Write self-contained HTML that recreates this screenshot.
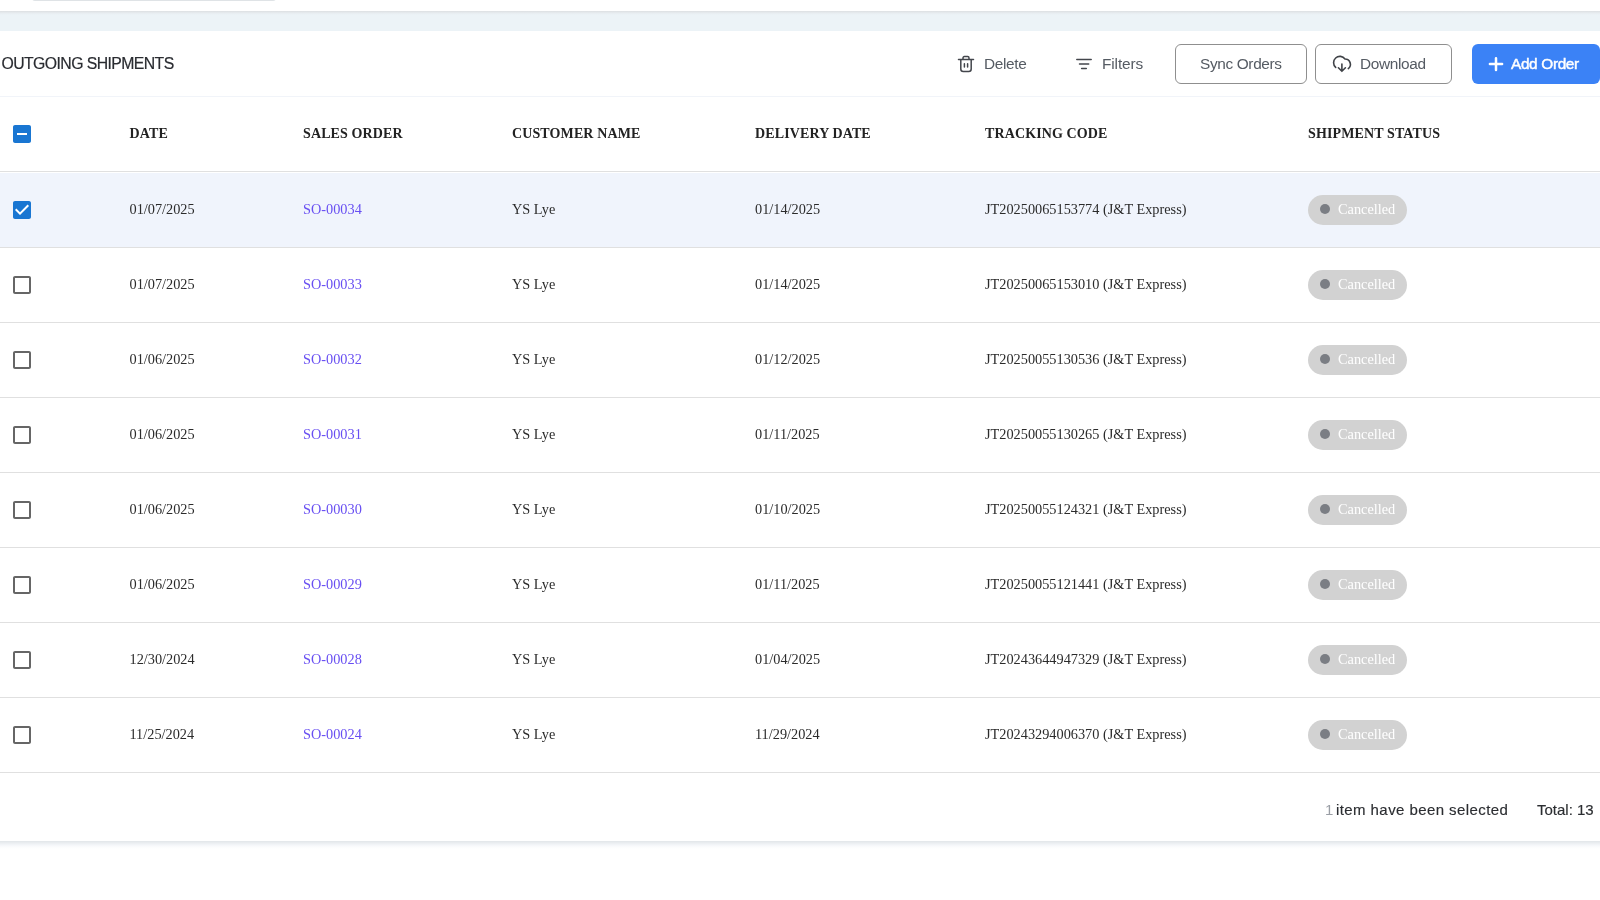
<!DOCTYPE html><html lang="en"><head><meta charset="utf-8"><title>Outgoing Shipments</title><style>
*{box-sizing:border-box;margin:0;padding:0}
html,body{width:1600px;height:900px;overflow:hidden;background:#fff}
body{font-family:"Liberation Sans",sans-serif;color:#2b2b2b;position:relative}
.abs{position:absolute}
#wrap{position:absolute;left:0;top:0;width:1600px;height:900px;will-change:transform}
.topcard{left:0;top:0;width:1600px;height:11px;background:#fff}
.topsh{left:0;top:11px;width:1600px;height:4px;background:linear-gradient(#dcdfe2 0%,#e4e8eb 33%,#e9eff3 66%,#ecf3f7 100%)}
.botsh{left:0;top:841px;width:1600px;height:8px;background:linear-gradient(#e2e6e9 0%,#ebeef1 25%,#f4f6f9 50%,#fbfcfd 75%,#fff 100%)}
.topline{left:32px;top:-4px;width:244px;height:5px;border-bottom:1px solid #dfe3e6;border-radius:0 0 3px 3px}
.band{left:0;top:0;width:1600px;height:31px;background:#ecf3f7}
.card{left:0;top:31px;width:1600px;height:810px;background:#fff}
.title{left:1.5px;top:54px;font-size:15.8px;line-height:20px;color:#2a2c31;letter-spacing:-0.58px;white-space:nowrap;-webkit-text-stroke:0.2px #2a2c31}
.hr{left:0;width:1600px;height:1px;background:#e0e0e0}
.tbtn{font-size:15.4px;line-height:20px;color:#555b63;white-space:nowrap;letter-spacing:-0.35px}
.obtn{top:44px;height:40px;border:1px solid #8f8f8f;border-radius:6px;background:#fff}
.pbtn{left:1472px;top:44px;width:128px;height:40px;border-radius:6px;background:#3b82f6}
.th{font-family:"Liberation Serif",serif;font-weight:bold;font-size:14px;line-height:20px;top:124px;color:#222;white-space:nowrap;letter-spacing:.12px}
.td{font-family:"Liberation Serif",serif;font-size:14.3px;line-height:20px;color:#2b2b2b;white-space:nowrap}
.lnk{color:#684ff2}
.sel{left:0;top:173px;width:1600px;height:74px;background:#f0f4fc}
.cb{left:13px;width:18px;height:18px;border:2px solid #5f5f5f;border-radius:2.5px;background:#fff}
.cbon{left:13px;width:18px;height:18px;border-radius:2.5px;background:#1b74d8}
.chip{left:1308px;width:99px;height:30px;border-radius:15px;background:#d2d2d2}
.dot{left:12px;top:9px;width:10px;height:10px;border-radius:50%;background:#7b7e84}
.chip span{position:absolute;left:30px;top:4px;font-family:"Liberation Serif",serif;font-size:14.300px;line-height:20px;color:#fff}
.foot{font-size:15px;line-height:20px;top:800px;color:#2b2d31;white-space:nowrap;-webkit-text-stroke:0.15px #2b2d31}
</style></head><body>
<div id="wrap">
<div class="abs band"></div><div class="abs topcard"></div><div class="abs topsh"></div><div class="abs botsh"></div><div class="abs topline"></div>
<div class="abs card"></div>
<div class="abs title">OUTGOING SHIPMENTS</div>
<svg class="abs" style="left:954px;top:52px" width="24" height="24" viewBox="0 0 24 24" fill="none" stroke="#43464c" stroke-width="1.5" stroke-linecap="round" stroke-linejoin="round"><path d="M4.500 7.500H19.500M6.800 7.500V17a2.500 2.500 0 0 0 2.500 2.500h5.400a2.500 2.500 0 0 0 2.500-2.500V7.500M9 7.300V5.900a1.300 1.300 0 0 1 1.300-1.300h3.400a1.300 1.300 0 0 1 1.300 1.300V7.300M10.400 11.850V15M13.600 11.850V15"/></svg>
<div class="abs tbtn" style="left:984px;top:54px">Delete</div>
<svg class="abs" style="left:1072px;top:52px" width="24" height="24" viewBox="0 0 24 24" fill="none" stroke="#43464c" stroke-width="1.500" stroke-linecap="round"><path d="M4.800 7.500H19.200M7.500 12H16.700M9.600 16.500H14.300"/></svg>
<div class="abs tbtn" style="left:1102px;top:54px;letter-spacing:-0.1px">Filters</div>
<div class="abs obtn" style="left:1175px;width:132px"></div><div class="abs tbtn" style="left:1200px;top:54px">Sync Orders</div>
<div class="abs obtn" style="left:1315px;width:137px"></div>
<svg class="abs" style="left:1330px;top:52px" width="24" height="24" viewBox="0 0 24 24" fill="none" stroke="#3f4247" stroke-width="1.600" stroke-linecap="round" stroke-linejoin="round"><path d="M5.690 15.380A6.300 6.300 0 1 1 15 7A5.360 5.360 0 0 1 18.300 16.600M11.900 12V19.300M8.400 15.800L11.900 19.300L15.400 15.800"/></svg>
<div class="abs tbtn" style="left:1360px;top:54px">Download</div>
<div class="abs pbtn"></div>
<svg class="abs" style="left:1483.500px;top:52px" width="24" height="24" viewBox="0 0 24 24" fill="none" stroke="#fff" stroke-width="2.500" stroke-linecap="round"><path d="M12 6.200V18M5.900 12.100H18.100"/></svg>
<div class="abs tbtn" style="left:1511px;top:54px;color:#fff;letter-spacing:-0.35px;-webkit-text-stroke:0.45px #fff">Add Order</div>
<div class="abs hr" style="top:96px;background:#f1f4f9"></div>
<div class="abs th" style="left:129.5px">DATE</div>
<div class="abs th" style="left:303px">SALES ORDER</div>
<div class="abs th" style="left:512px">CUSTOMER NAME</div>
<div class="abs th" style="left:755px">DELIVERY DATE</div>
<div class="abs th" style="left:985px">TRACKING CODE</div>
<div class="abs th" style="left:1308px">SHIPMENT STATUS</div>
<svg class="abs" style="left:10px;top:122px" width="24" height="24" viewBox="0 0 24 24"><rect x="4" y="4" width="16" height="16" fill="#fff"/><path fill="#1976d2" d="M19 3H5c-1.100 0-2 .9-2 2v14c0 1.100.9 2 2 2h14c1.100 0 2-.9 2-2V5c0-1.100-.9-2-2-2zm-2 10H7v-2h10v2z"/></svg>
<div class="abs hr" style="top:171px"></div>
<div class="abs sel"></div>
<svg class="abs" style="left:10px;top:198px" width="24" height="24" viewBox="0 0 24 24"><rect x="4" y="4" width="16" height="16" fill="#fff"/><path fill="#1976d2" d="M19 3H5c-1.110 0-2 .9-2 2v14c0 1.100.890 2 2 2h14c1.110 0 2-.9 2-2V5c0-1.100-.890-2-2-2zm-9 14l-5-5 1.410-1.410L10 14.170l7.590-7.590L19 8l-9 9z"/></svg>
<div class="abs td" style="left:129.5px;top:199px">01/07/2025</div>
<div class="abs td lnk" style="left:303px;top:199px">SO-00034</div>
<div class="abs td" style="left:512px;top:199px">YS Lye</div>
<div class="abs td" style="left:755px;top:199px">01/14/2025</div>
<div class="abs td" style="left:985px;top:199px">JT20250065153774 (J&amp;T Express)</div>
<div class="abs chip" style="top:195px"><div class="abs dot"></div><span>Cancelled</span></div>
<div class="abs hr" style="top:247px"></div>
<svg class="abs" style="left:10px;top:273px" width="24" height="24" viewBox="0 0 24 24"><path fill="#666" d="M19 5v14H5V5h14m0-2H5c-1.100 0-2 .9-2 2v14c0 1.100.9 2 2 2h14c1.100 0 2-.9 2-2V5c0-1.100-.9-2-2-2z"/></svg>
<div class="abs td" style="left:129.5px;top:274px">01/07/2025</div>
<div class="abs td lnk" style="left:303px;top:274px">SO-00033</div>
<div class="abs td" style="left:512px;top:274px">YS Lye</div>
<div class="abs td" style="left:755px;top:274px">01/14/2025</div>
<div class="abs td" style="left:985px;top:274px">JT20250065153010 (J&amp;T Express)</div>
<div class="abs chip" style="top:270px"><div class="abs dot"></div><span>Cancelled</span></div>
<div class="abs hr" style="top:322px"></div>
<svg class="abs" style="left:10px;top:348px" width="24" height="24" viewBox="0 0 24 24"><path fill="#666" d="M19 5v14H5V5h14m0-2H5c-1.100 0-2 .9-2 2v14c0 1.100.9 2 2 2h14c1.100 0 2-.9 2-2V5c0-1.100-.9-2-2-2z"/></svg>
<div class="abs td" style="left:129.5px;top:349px">01/06/2025</div>
<div class="abs td lnk" style="left:303px;top:349px">SO-00032</div>
<div class="abs td" style="left:512px;top:349px">YS Lye</div>
<div class="abs td" style="left:755px;top:349px">01/12/2025</div>
<div class="abs td" style="left:985px;top:349px">JT20250055130536 (J&amp;T Express)</div>
<div class="abs chip" style="top:345px"><div class="abs dot"></div><span>Cancelled</span></div>
<div class="abs hr" style="top:397px"></div>
<svg class="abs" style="left:10px;top:423px" width="24" height="24" viewBox="0 0 24 24"><path fill="#666" d="M19 5v14H5V5h14m0-2H5c-1.100 0-2 .9-2 2v14c0 1.100.9 2 2 2h14c1.100 0 2-.9 2-2V5c0-1.100-.9-2-2-2z"/></svg>
<div class="abs td" style="left:129.5px;top:424px">01/06/2025</div>
<div class="abs td lnk" style="left:303px;top:424px">SO-00031</div>
<div class="abs td" style="left:512px;top:424px">YS Lye</div>
<div class="abs td" style="left:755px;top:424px">01/11/2025</div>
<div class="abs td" style="left:985px;top:424px">JT20250055130265 (J&amp;T Express)</div>
<div class="abs chip" style="top:420px"><div class="abs dot"></div><span>Cancelled</span></div>
<div class="abs hr" style="top:472px"></div>
<svg class="abs" style="left:10px;top:498px" width="24" height="24" viewBox="0 0 24 24"><path fill="#666" d="M19 5v14H5V5h14m0-2H5c-1.100 0-2 .9-2 2v14c0 1.100.9 2 2 2h14c1.100 0 2-.9 2-2V5c0-1.100-.9-2-2-2z"/></svg>
<div class="abs td" style="left:129.5px;top:499px">01/06/2025</div>
<div class="abs td lnk" style="left:303px;top:499px">SO-00030</div>
<div class="abs td" style="left:512px;top:499px">YS Lye</div>
<div class="abs td" style="left:755px;top:499px">01/10/2025</div>
<div class="abs td" style="left:985px;top:499px">JT20250055124321 (J&amp;T Express)</div>
<div class="abs chip" style="top:495px"><div class="abs dot"></div><span>Cancelled</span></div>
<div class="abs hr" style="top:547px"></div>
<svg class="abs" style="left:10px;top:573px" width="24" height="24" viewBox="0 0 24 24"><path fill="#666" d="M19 5v14H5V5h14m0-2H5c-1.100 0-2 .9-2 2v14c0 1.100.9 2 2 2h14c1.100 0 2-.9 2-2V5c0-1.100-.9-2-2-2z"/></svg>
<div class="abs td" style="left:129.5px;top:574px">01/06/2025</div>
<div class="abs td lnk" style="left:303px;top:574px">SO-00029</div>
<div class="abs td" style="left:512px;top:574px">YS Lye</div>
<div class="abs td" style="left:755px;top:574px">01/11/2025</div>
<div class="abs td" style="left:985px;top:574px">JT20250055121441 (J&amp;T Express)</div>
<div class="abs chip" style="top:570px"><div class="abs dot"></div><span>Cancelled</span></div>
<div class="abs hr" style="top:622px"></div>
<svg class="abs" style="left:10px;top:648px" width="24" height="24" viewBox="0 0 24 24"><path fill="#666" d="M19 5v14H5V5h14m0-2H5c-1.100 0-2 .9-2 2v14c0 1.100.9 2 2 2h14c1.100 0 2-.9 2-2V5c0-1.100-.9-2-2-2z"/></svg>
<div class="abs td" style="left:129.5px;top:649px">12/30/2024</div>
<div class="abs td lnk" style="left:303px;top:649px">SO-00028</div>
<div class="abs td" style="left:512px;top:649px">YS Lye</div>
<div class="abs td" style="left:755px;top:649px">01/04/2025</div>
<div class="abs td" style="left:985px;top:649px">JT20243644947329 (J&amp;T Express)</div>
<div class="abs chip" style="top:645px"><div class="abs dot"></div><span>Cancelled</span></div>
<div class="abs hr" style="top:697px"></div>
<svg class="abs" style="left:10px;top:723px" width="24" height="24" viewBox="0 0 24 24"><path fill="#666" d="M19 5v14H5V5h14m0-2H5c-1.100 0-2 .9-2 2v14c0 1.100.9 2 2 2h14c1.100 0 2-.9 2-2V5c0-1.100-.9-2-2-2z"/></svg>
<div class="abs td" style="left:129.5px;top:724px">11/25/2024</div>
<div class="abs td lnk" style="left:303px;top:724px">SO-00024</div>
<div class="abs td" style="left:512px;top:724px">YS Lye</div>
<div class="abs td" style="left:755px;top:724px">11/29/2024</div>
<div class="abs td" style="left:985px;top:724px">JT20243294006370 (J&amp;T Express)</div>
<div class="abs chip" style="top:720px"><div class="abs dot"></div><span>Cancelled</span></div>
<div class="abs hr" style="top:772px"></div>
<div class="abs foot" style="left:1325px;color:#9a9ea5;-webkit-text-stroke:0">1</div>
<div class="abs foot" style="left:1336px;letter-spacing:0.420px">item have been selected</div>
<div class="abs foot" style="left:1537px">Total: 13</div>
</div></body></html>
